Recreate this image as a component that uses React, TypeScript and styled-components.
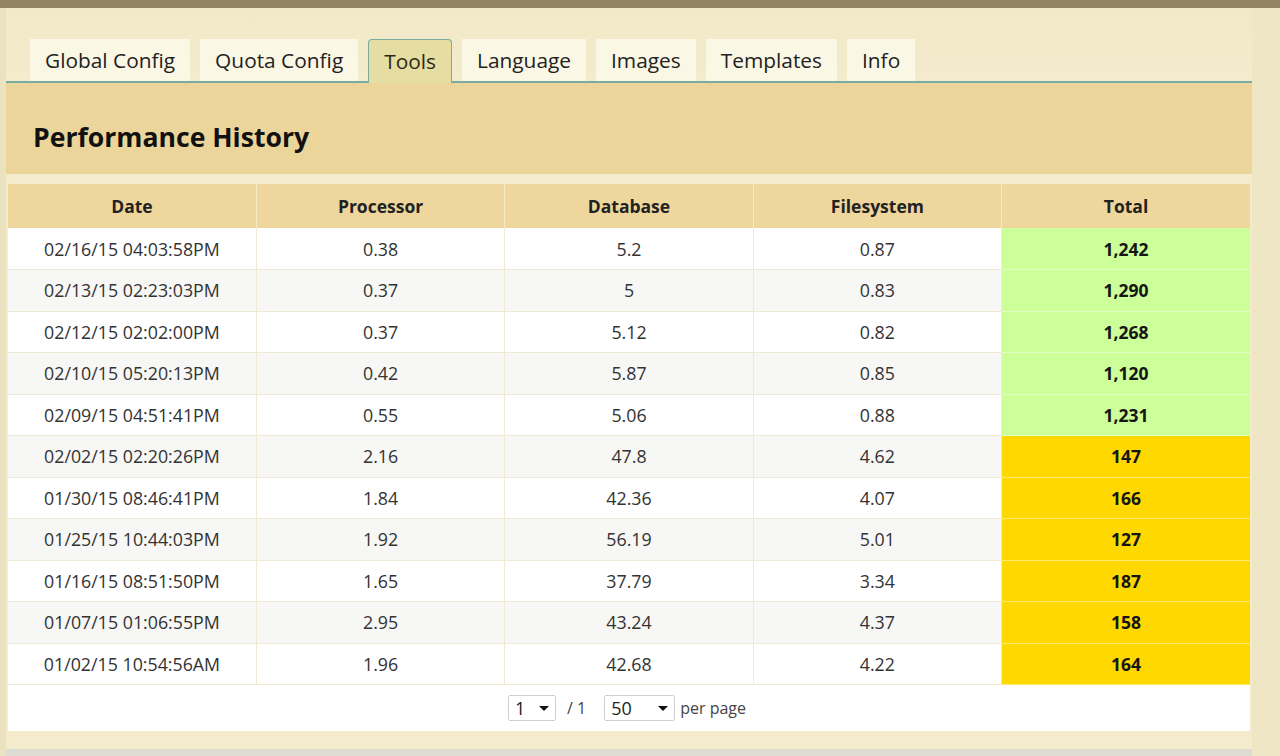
import React from "react";
import styled, { createGlobalStyle } from "styled-components";

const Global = createGlobalStyle`
  html, body { margin: 0; padding: 0; }
  body {
    background: #efe6c5;
    font-family: "Open Sans", "Noto Sans", sans-serif;
    color: #333;
    width: 1280px;
    height: 756px;
    overflow: hidden;
  }
`;

const TopBar = styled.div`
  height: 8px;
  background: #938561;
`;

const Shell = styled.div`
  display: flex;
  height: 748px;
`;

const LeftEdge = styled.div`
  width: 6px;
  background: #ebe2bf;
  flex: none;
`;

const Main = styled.div`
  width: 1246px;
  flex: none;
  display: flex;
  flex-direction: column;
  background: #f3ebcb;
`;

const RightEdge = styled.div`
  flex: 1;
  background: #efe6c6;
`;

const TabBar = styled.div`
  display: flex;
  gap: 10px;
  align-items: flex-end;
  padding: 31px 0 0 24px;
  height: 42px;
  border-bottom: 2px solid #78aca2;
  background: linear-gradient(#f2e9c8, #f3ebcc);
`;

const Tab = styled.div<{ $active?: boolean }>`
  height: ${(p) => (p.$active ? "44px" : "42px")};
  box-sizing: border-box;
  padding: 0 15px 1px;
  display: flex;
  align-items: center;
  font-size: 20.87px;
  color: ${(p) => (p.$active ? "#2a2a12" : "#222")};
  background: ${(p) => (p.$active ? "#e6dda2" : "#fbf7e5")};
  border: ${(p) => (p.$active ? "1px solid #78aca2" : "none")};
  border-bottom: none;
  border-radius: ${(p) => (p.$active ? "4px 4px 0 0" : "0")};
  margin-bottom: ${(p) => (p.$active ? "-2px" : "0")};
`;

const Header = styled.div`
  height: 91px;
  box-sizing: border-box;
  background: #ecd59a;
  display: flex;
  align-items: center;
  padding: 16px 0 0 27px;
`;

const Title = styled.h1`
  margin: 0;
  font-size: 26.6px;
  font-weight: 700;
  color: #111;
`;

const TableWrap = styled.div`
  margin: 10px 2px 0 2px;
  background: #fff;
`;

const Table = styled.table`
  width: 100%;
  border-collapse: collapse;
  table-layout: fixed;
`;

const Th = styled.th`
  height: 44px;
  box-sizing: border-box;
  padding: 0;
  background: #eed69d;
  font-size: 17.5px;
  font-weight: 700;
  color: #222;
  border-right: 1px solid #f6ebc6;
  &:last-child { border-right: none; }
`;

const Tr = styled.tr<{ $alt: boolean }>`
  background: ${(p) => (p.$alt ? "#f7f7f5" : "#ffffff")};
`;

const Td = styled.td`
  height: 41.5px;
  box-sizing: border-box;
  text-align: center;
  font-size: 17.8px;
  color: #333;
  padding: 0;
  border-right: 1px solid #f1ead2;
  border-bottom: 1px solid #f1ead2;
`;

const TotalTd = styled.td<{ $good: boolean }>`
  height: 41.5px;
  box-sizing: border-box;
  text-align: center;
  font-size: 17.5px;
  font-weight: 700;
  color: #151515;
  padding: 0;
  background: ${(p) => (p.$good ? "#ccfe99" : "#ffd800")};
  border-bottom: 1px solid ${(p) => (p.$good ? "#e2ffc4" : "#ffe96a")};
`;

const Pager = styled.div`
  height: 46px;
  display: flex;
  align-items: center;
  justify-content: center;
  font-size: 16px;
  color: #333;
  padding-right: 4px;
`;

const Select = styled.div<{ $w: number }>`
  width: ${(p) => p.$w}px;
  height: 26px;
  box-sizing: border-box;
  border: 1px solid #cfcfcf;
  border-radius: 2px;
  background: #fff;
  display: flex;
  align-items: center;
  justify-content: space-between;
  padding: 0 6px 0 6px;
  font-size: 18px;
  color: #222;
`;

const Caret = styled.span`
  width: 0;
  height: 0;
  border-left: 5px solid transparent;
  border-right: 5px solid transparent;
  border-top: 5px solid #111;
`;

const PagerText = styled.span<{ $ml: number; $mr: number }>`
  margin: 0 ${(p) => p.$mr}px 0 ${(p) => p.$ml}px;
  color: #444;
`;

const Bottom = styled.div`
  height: 18px;
  background: #f3ebcb;
`;

const Footer = styled.div`
  flex: 1;
  background: #dddcd2;
`;

const tabs = ["Global Config", "Quota Config", "Tools", "Language", "Images", "Templates", "Info"];

const rows: [string, string, string, string, string][] = [
  ["02/16/15 04:03:58PM", "0.38", "5.2", "0.87", "1,242"],
  ["02/13/15 02:23:03PM", "0.37", "5", "0.83", "1,290"],
  ["02/12/15 02:02:00PM", "0.37", "5.12", "0.82", "1,268"],
  ["02/10/15 05:20:13PM", "0.42", "5.87", "0.85", "1,120"],
  ["02/09/15 04:51:41PM", "0.55", "5.06", "0.88", "1,231"],
  ["02/02/15 02:20:26PM", "2.16", "47.8", "4.62", "147"],
  ["01/30/15 08:46:41PM", "1.84", "42.36", "4.07", "166"],
  ["01/25/15 10:44:03PM", "1.92", "56.19", "5.01", "127"],
  ["01/16/15 08:51:50PM", "1.65", "37.79", "3.34", "187"],
  ["01/07/15 01:06:55PM", "2.95", "43.24", "4.37", "158"],
  ["01/02/15 10:54:56AM", "1.96", "42.68", "4.22", "164"],
];

export default function App() {
  return (
    <>
      <Global />
      <TopBar />
      <Shell>
        <LeftEdge />
        <Main>
          <TabBar>
            {tabs.map((t) => (
              <Tab key={t} $active={t === "Tools"}>
                {t}
              </Tab>
            ))}
          </TabBar>
          <Header>
            <Title>Performance History</Title>
          </Header>
          <TableWrap>
            <Table>
              <thead>
                <tr>
                  <Th>Date</Th>
                  <Th>Processor</Th>
                  <Th>Database</Th>
                  <Th>Filesystem</Th>
                  <Th>Total</Th>
                </tr>
              </thead>
              <tbody>
                {rows.map((r, i) => (
                  <Tr key={r[0]} $alt={i % 2 === 1}>
                    <Td>{r[0]}</Td>
                    <Td>{r[1]}</Td>
                    <Td>{r[2]}</Td>
                    <Td>{r[3]}</Td>
                    <TotalTd $good={r[4].includes(",")}>{r[4]}</TotalTd>
                  </Tr>
                ))}
              </tbody>
            </Table>
            <Pager>
              <Select $w={48}>
                1 <Caret />
              </Select>
              <PagerText $ml={11} $mr={18}>/ 1</PagerText>
              <Select $w={71}>
                50 <Caret />
              </Select>
              <PagerText $ml={5} $mr={0}>per page</PagerText>
            </Pager>
          </TableWrap>
          <Bottom />
          <Footer />
        </Main>
        <RightEdge />
      </Shell>
    </>
  );
}
